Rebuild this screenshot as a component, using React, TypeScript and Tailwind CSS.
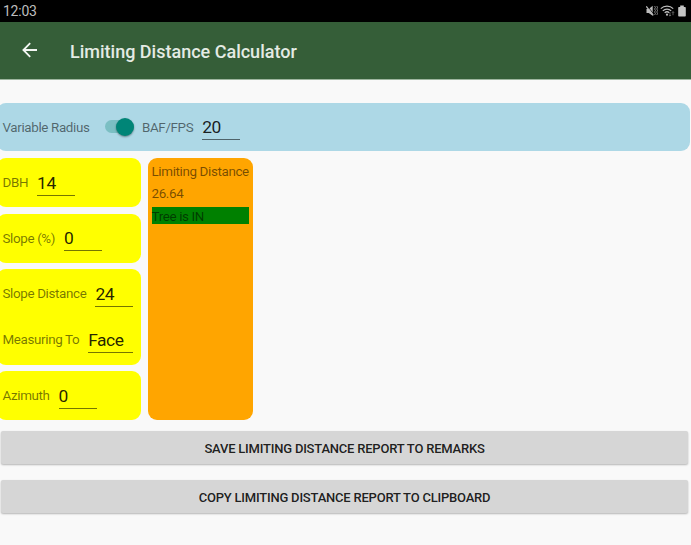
import React from "react";

type FieldProps = { label: string; value: string; width?: string };

function Field({ label, value, width = "w-[38px]" }: FieldProps) {
  return (
    <div className="flex h-[49px] items-center pl-[2.5px]">
      <span className="pt-[2px] text-[13.4px] tracking-[-0.36px] text-black/54">{label}</span>
      <span
        className={`${width} ml-[9px] mt-[1.5px] h-[25px] border-b border-black/54 text-[17.4px] leading-[25px] tracking-[-0.5px] text-black/87`}
      >
        {value}
      </span>
    </div>
  );
}

function StatusBar() {
  return (
    <div className="flex h-[22px] items-center justify-between bg-black pl-[3px] pr-[5px] text-[#bdbdbd]">
      <span className="text-[14px] leading-[22px] tracking-[-0.25px]">12:03</span>
      <div className="mt-[-1px] flex items-center">
        <svg width="12" height="12" viewBox="0 0 12 12" fill="#bdbdbd">
          <path d="M.5 4h2.2l4-3.2v10L2.7 8H.5z" />
          <path d="M1 .6l7 9" stroke="#000" strokeWidth=".8" />
          <path d="M.3 1.3l7 9" stroke="#bdbdbd" strokeWidth="1.2" />
          <path d="M8.6 1l.8 1.5-.8 1.5.8 1.5-.8 1.5.8 1.5-.8 1.5M10.8 1l.7 1.5-.7 1.5.7 1.5-.7 1.5.7 1.5-.7 1.5" fill="none" stroke="#bbb" strokeWidth=".7" />
        </svg>
        <svg className="ml-[2px]" width="16" height="12" viewBox="0 0 16 12" fill="none" stroke="#bdbdbd">
          <path d="M.8 3.7C4.2.2 9.8.2 13.2 3.7M2.8 5.9c2.3-2.4 6.1-2.4 8.4 0M4.7 7.9c1.3-1.3 3.3-1.3 4.6 0" strokeWidth="1.2" />
          <circle cx="7" cy="9.7" r="1.1" fill="#bdbdbd" stroke="none" />
          <path d="M10 7.5v3.6M8.9 10l1.1 1.1 1.1-1.1M13 10.2V6.6M11.9 7.8L13 6.7l1.1 1.1" stroke="#777" strokeWidth=".8" />
        </svg>
        <svg className="ml-[2px] mt-[1px]" width="8" height="12" viewBox="0 0 8 12" fill="#c4c4c4">
          <path d="M2.2.5h3.6V2H7q.8 0 .8.7v8q0 .8-.8.8H1q-.8 0-.8-.8v-8Q.2 2 1 2h1.2z" />
        </svg>
      </div>
    </div>
  );
}

function ReportButton({ children }: { children: React.ReactNode }) {
  return (
    <button className="block h-[33px] w-[687px] rounded-[2px] bg-[#d6d6d6] pt-[2px] text-center text-[13px] font-medium tracking-[-0.21px] text-black/87 shadow-[0_1px_2px_rgba(0,0,0,0.28)]">
      {children}
    </button>
  );
}

export default function App() {
  return (
    <div className="h-[545px] w-[691px] overflow-hidden bg-[#f9f9f9] font-[Roboto,sans-serif]">
      <StatusBar />
      <header className="flex h-[57.5px] items-center border-b border-[#9db59e] bg-[#355e38] pl-[22px]">
        <svg width="16" height="16" viewBox="0 0 16 16" fill="none" stroke="#f4f7f4" strokeWidth="1.8">
          <path d="M15 8H2M8.2 1.2L1.4 8l6.8 6.8" />
        </svg>
        <h1 className="ml-[32px] mt-[2px] text-[18px] font-medium text-[#e4ebe4]">Limiting Distance Calculator</h1>
      </header>

      <main className="pt-[23px]">
        <section className="-ml-[3px] flex h-[48.5px] w-[693px] items-center rounded-[9px] bg-[#add8e6] pl-[5.5px]">
          <span className="w-[87px] whitespace-nowrap pt-[2px] text-[13.4px] tracking-[-0.36px] text-black/54">Variable Radius</span>
          <span className="ml-[15px] flex h-[13px] w-[29px] items-center justify-end rounded-full bg-[#7bbfc3]">
            <span className="size-[18px] shrink-0 rounded-full bg-[#008577] shadow-[0_1px_2px_rgba(0,0,0,0.4)]" />
          </span>
          <span className="ml-[6px]">
            <Field label="BAF/FPS" value="20" />
          </span>
        </section>

        <div className="mt-[7px] flex h-[262px] gap-[6.5px]">
          <div className="-ml-[3px] flex w-[144px] flex-col gap-[6.5px]">
            <section className="h-[49px] rounded-[9px] bg-[#ffff00] pl-[3px]">
              <Field label="DBH" value="14" />
            </section>
            <section className="h-[49px] rounded-[9px] bg-[#ffff00] pl-[3px]">
              <Field label="Slope (%)" value="0" />
            </section>
            <section className="h-[95.5px] rounded-[9px] bg-[#ffff00] pl-[3px]">
              <Field label="Slope Distance" value="24" />
              <div className="-mt-[3px]">
                <Field label="Measuring To" value="Face" width="w-[45px]" />
              </div>
            </section>
            <section className="h-[49px] rounded-[9px] bg-[#ffff00] pl-[3px]">
              <Field label="Azimuth" value="0" />
            </section>
          </div>

          <section className="flex w-[105.5px] flex-col gap-[6px] rounded-[9px] bg-[#ffa500] px-[4px] pt-[5px] text-[13.4px] leading-[16.5px] tracking-[-0.36px] text-black/54">
            <p className="whitespace-nowrap leading-[17.5px]">Limiting Distance</p>
            <p className="-mt-[1px]">26.64</p>
            <p className="-mt-[1px] h-[16.5px] bg-[#008000] leading-[19px]">Tree is IN</p>
          </section>
        </div>

        <div className="mt-[11px] flex flex-col gap-[16px] pl-[1px]">
          <ReportButton>SAVE LIMITING DISTANCE REPORT TO REMARKS</ReportButton>
          <ReportButton>COPY LIMITING DISTANCE REPORT TO CLIPBOARD</ReportButton>
        </div>
      </main>
    </div>
  );
}
